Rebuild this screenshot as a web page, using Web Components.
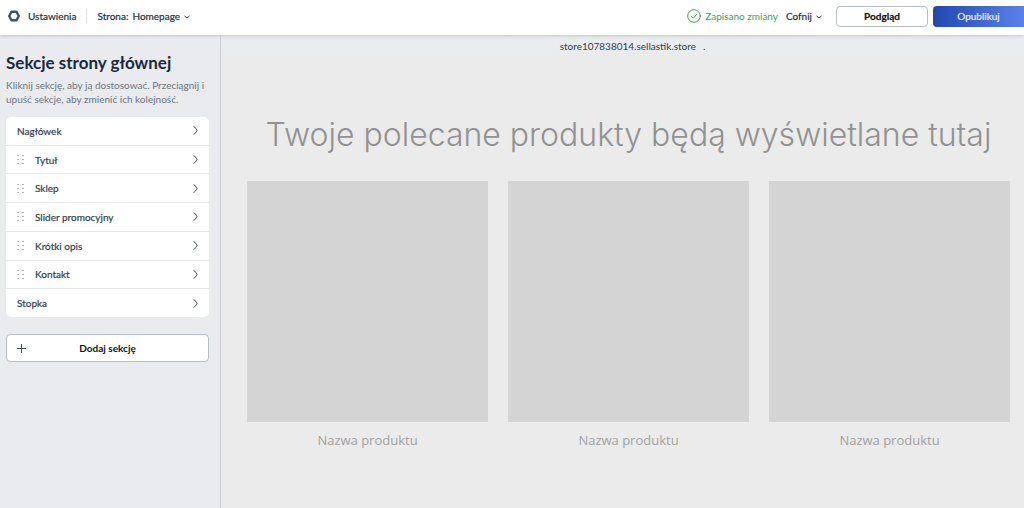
<!DOCTYPE html>
<html lang="pl">
<head>
<meta charset="utf-8">
<meta name="viewport" content="width=device-width, initial-scale=1">
<title>Edytor strony</title>
<style>
html, body { margin: 0; min-height: 100%; }
body { font-family: Lato, "Liberation Sans", sans-serif; font-size: 10px; color: #23303d; background: #ebebeb; }
</style>
</head>
<body>
<store-editor></store-editor>
<script>
const define = (name, html) => {
  const template = document.createElement('template');
  template.innerHTML = html;
  customElements.define(name, class extends HTMLElement {
    constructor() {
      super();
      this.attachShadow({ mode: 'open' }).append(template.content.cloneNode(true));
    }
  });
};

define('icon-chevron', `
<style>
:host { display: inline-flex; }
svg { width: 5px; height: 9px; fill: none; stroke: currentColor; stroke-width: 1.2; stroke-linecap: round; stroke-linejoin: round; }
:host([down]) svg { width: 6px; height: 4px; stroke-width: 1; }
:host([down]) .right, :host(:not([down])) .down { display: none; }
</style>
<svg class="right" viewBox="0 0 5 9" aria-hidden="true"><path d="M.8.8Q2 1.200 4.200 4.500 2 7.800.8 8.200"/></svg>
<svg class="down" viewBox="0 0 6 4" aria-hidden="true"><path d="M.8 1.200 3 3 5.200 1.200"/></svg>`);

define('outline-button', `
<style>
:host { display: block; }
button { box-sizing: border-box; width: 100%; height: 100%; margin: 0; padding: 0 10px; border: 1px solid #b9bec6; border-radius: 4px; background: #fff; color: #111; font: 700 10px/12px Lato, "Liberation Sans", sans-serif; display: grid; grid-template-columns: 10px 1fr 10px; align-items: center; cursor: pointer; }
.icon { display: flex; }
</style>
<button type="button"><span class="icon"><slot name="icon"></slot></span><span><slot></slot></span></button>`);

define('publish-button', `
<style>
:host { display: block; }
button { width: 100%; height: 100%; margin: 0; padding: 0; border: 0; border-radius: 4px 0 0 4px; background: linear-gradient(90deg, #2148ae, #5b82ea); color: #e8eeff; font: 400 10px/12px Lato, "Liberation Sans", sans-serif; cursor: pointer; }
</style>
<button type="button"><slot></slot></button>`);

define('editor-header', `
<style>
:host { display: flex; align-items: center; box-sizing: border-box; height: 35px; padding-bottom: 3px; padding-left: 8px; background: #fff; box-shadow: 0 1px 3px #c4c6ca; position: relative; -webkit-text-stroke: 0.2px; }
a, button { color: inherit; text-decoration: none; font: 400 10px/12px Lato, "Liberation Sans", sans-serif; }
button { display: flex; align-items: center; gap: 4px; border: 0; padding: 0; background: none; cursor: pointer; -webkit-text-stroke: inherit; }
button icon-chevron { padding-top: 2px; }
a { display: flex; align-items: center; gap: 8px; }
.divider { width: 1px; height: 14px; margin: 0 10px; background: #dcdfe3; }
.page { margin-left: 4px; }
.status { display: flex; align-items: center; gap: 4px; margin-left: auto; color: #38a650; line-height: 12px; -webkit-text-stroke: 0; }
.undo { margin-left: 8px; }
outline-button { width: 92px; height: 21px; margin-left: 14px; }
publish-button { width: 91px; height: 21px; margin-left: 5px; }
</style>
<a href="#ustawienia"><svg width="12" height="12" viewBox="0 0 12 12" fill="none" stroke="#44515e" stroke-width="2.400" stroke-linejoin="round" aria-hidden="true"><path d="M3.600 1.700h4.800L10.800 6 8.400 10.300H3.600L1.200 6Z"/></svg>Ustawienia</a>
<span class="divider"></span>
<span>Strona:</span>
<button class="page" type="button">Homepage<icon-chevron down></icon-chevron></button>
<span class="status"><svg width="14" height="14" viewBox="0 0 14 14" fill="none" stroke="currentColor" stroke-linecap="round" stroke-linejoin="round" aria-hidden="true"><circle cx="7" cy="7" r="6.300"/><path d="M4.200 7.300 6.200 9.200 10 5.200"/></svg><span>Zapisano zmiany</span></span>
<button class="undo" type="button">Cofnij<icon-chevron down></icon-chevron></button>
<outline-button>Podgląd</outline-button>
<publish-button>Opublikuj</publish-button>`);

define('section-row', `
<style>
:host { display: block; }
button { box-sizing: border-box; width: 100%; height: 100%; display: flex; align-items: center; padding: 0 11px; border: 0; background: #fff; color: #33404d; font: 400 10px/12px Lato, "Liberation Sans", sans-serif; -webkit-text-stroke: 0.2px; cursor: pointer; }
.grip { display: none; width: 7px; height: 9px; margin-right: 11px; fill: #b0b5bc; }
:host([movable]) .grip { display: block; }
icon-chevron { margin-left: auto; color: #6a7480; }
</style>
<button type="button"><svg class="grip" viewBox="0 0 7 9" aria-hidden="true"><path d="M0 0h2v1H0zM5 0h2v1H5zM0 4h2v1H0zM5 4h2v1H5zM0 8h2v1H0zM5 8h2v1H5z"/></svg><span><slot></slot></span><icon-chevron></icon-chevron></button>`);

define('sections-panel', `
<style>
:host { display: block; box-sizing: border-box; padding: 17px 11px 20px 6px; background: #e9ebef; border-right: 1px solid #cacdd5; }
h1 { margin: 0; font-size: 17px; line-height: 21px; font-weight: 700; color: #1b2a39; }
p { margin: 5px 0 0; font-size: 10px; line-height: 14px; color: #6d7580; }
nav { display: grid; grid-auto-rows: 1fr; gap: 1px; min-height: 200px; margin: 11px 0 17px; border-radius: 5px; overflow: hidden; background: #e6e8ec; }
outline-button { height: 28px; }
</style>
<h1>Sekcje strony głównej</h1>
<p>Kliknij sekcję, aby ją dostosować. Przeciągnij i upuść sekcje, aby zmienić ich kolejność.</p>
<nav>
<section-row>Nagłówek</section-row>
<section-row movable>Tytuł</section-row>
<section-row movable>Sklep</section-row>
<section-row movable>Slider promocyjny</section-row>
<section-row movable>Krótki opis</section-row>
<section-row movable>Kontakt</section-row>
<section-row>Stopka</section-row>
</nav>
<outline-button><svg slot="icon" width="9" height="9" viewBox="0 0 9 9" stroke="#44505c" aria-hidden="true"><path d="M4.500 0v9M0 4.500h9"/></svg>Dodaj sekcję</outline-button>`);

define('product-card', `
<style>
:host { display: block; }
figure { margin: 0; text-align: center; }
.image { aspect-ratio: 1; background: #d4d4d4; }
figcaption { margin-top: 10px; font: 400 13px/17px "Open Sans", "Noto Sans", sans-serif; color: #a2a2a2; }
</style>
<figure><div class="image"></div><figcaption><slot></slot></figcaption></figure>`);

define('store-preview', `
<style>
:host { display: block; background: linear-gradient(#e9ecf0, #ebebeb 24px); }
.address { display: flex; justify-content: center; gap: 7px; padding: 4px 0 0 20px; font-size: 10px; line-height: 14px; color: #36424e; }
h2 { margin: 59px 0 23px; padding-left: 12px; text-align: center; font: 300 32px/46px Inter, sans-serif; color: #929292; }
.products { display: grid; grid-template-columns: repeat(3, 1fr); gap: 20px; padding: 0 14px 20px 26px; }
</style>
<div class="address"><span>store107838014.sellastik.store</span><span>.</span></div>
<h2>Twoje polecane produkty będą wyświetlane tutaj</h2>
<div class="products">
<product-card>Nazwa produktu</product-card>
<product-card>Nazwa produktu</product-card>
<product-card>Nazwa produktu</product-card>
</div>`);

define('store-editor', `
<style>
:host { display: flex; flex-direction: column; min-height: 100vh; }
editor-header { z-index: 1; }
.workspace { flex: 1; display: grid; grid-template-columns: 221px 1fr; }
</style>
<editor-header></editor-header>
<div class="workspace"><sections-panel></sections-panel><store-preview></store-preview></div>`);
</script>
</body>
</html>
